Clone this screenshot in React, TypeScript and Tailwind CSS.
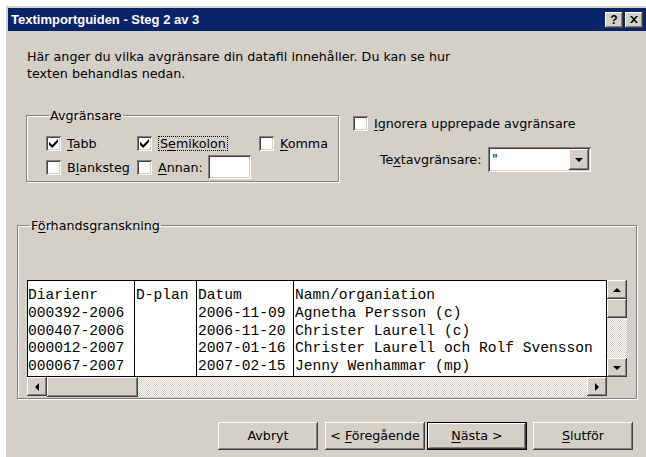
import React from "react";

// classic 3D edges
const raised =
  "shadow-[inset_-1px_-1px_#404040,inset_1px_1px_#ffffff,inset_-2px_-2px_#808080,inset_2px_2px_#d4d0c8]";
const sunken =
  "shadow-[inset_1px_1px_#808080,inset_-1px_-1px_#ffffff,inset_2px_2px_#404040,inset_-2px_-2px_#d4d0c8]";
const track =
  "bg-[image:repeating-conic-gradient(#d4d0c8_0_25%,#ffffff_0_50%)] bg-size-[2px_2px]";

type Dir = "up" | "down" | "left" | "right";

function Arrow({ dir }: { dir: Dir }) {
  const vertical = dir === "up" || dir === "down";
  const pts = {
    up: "0,4 4,0 8,4",
    down: "0,0 8,0 4,4",
    left: "4,0 4,8 0,4",
    right: "0,0 4,4 0,8",
  }[dir];
  return (
    <svg
      width={vertical ? 8 : 4}
      height={vertical ? 4 : 8}
      viewBox={vertical ? "0 0 8 4" : "0 0 4 8"}
    >
      <polygon points={pts} fill="#000" />
    </svg>
  );
}

function ScrollButton({ dir }: { dir: Dir }) {
  return (
    <div
      className={`flex h-[19px] w-[20px] shrink-0 items-center justify-center bg-[#d4d0c8] ${raised}`}
    >
      <Arrow dir={dir} />
    </div>
  );
}

function Check({ checked }: { checked?: boolean }) {
  return (
    <span
      className={`flex h-[15px] w-[15px] shrink-0 items-center justify-center bg-white ${sunken}`}
    >
      {checked && (
        <svg width="9" height="9" viewBox="0 0 7 7">
          <path d="M0 2.2 L2.5 4.6 L7 0 L7 2.4 L2.5 7 L0 4.6 Z" fill="#000" />
        </svg>
      )}
    </span>
  );
}

function U({ children }: { children: React.ReactNode }) {
  return <span className="underline underline-offset-[2px]">{children}</span>;
}

function Option({
  checked,
  focused,
  children,
}: {
  checked?: boolean;
  focused?: boolean;
  children: React.ReactNode;
}) {
  return (
    <label className="flex items-center gap-[6px] whitespace-nowrap">
      <Check checked={checked} />
      <span
        className={
          focused
            ? "border border-dotted border-black px-[1px] leading-[13px]"
            : "leading-[15px]"
        }
      >
        {children}
      </span>
    </label>
  );
}

function TitleButton({ children }: { children: React.ReactNode }) {
  return (
    <div
      className={`flex h-[16px] w-[18px] items-center justify-center bg-[#d4d0c8] font-['Liberation_Sans',Arial,sans-serif] text-[12px] font-bold leading-none text-black ${raised}`}
    >
      {children}
    </div>
  );
}

function PushButton({
  children,
  isDefault,
}: {
  children: React.ReactNode;
  isDefault?: boolean;
}) {
  const face = (
    <div
      className={`flex h-full w-full items-center justify-center bg-[#d4d0c8] ${raised}`}
    >
      <span className="whitespace-pre">{children}</span>
    </div>
  );
  if (isDefault) {
    return <div className="h-[28px] w-[100px] border border-black">{face}</div>;
  }
  return <div className="h-[28px] w-[100px]">{face}</div>;
}

const rows = [
  ["Diarienr", "D-plan", "Datum", "Namn/organiation"],
  ["000392-2006", "", "2006-11-09", "Agnetha Persson (c)"],
  ["000407-2006", "", "2006-11-20", "Christer Laurell (c)"],
  ["000012-2007", "", "2007-01-16", "Christer Laurell och Rolf Svensson"],
  ["000067-2007", "", "2007-02-15", "Jenny Wenhammar (mp)"],
];

const columns = [
  "w-[107px] shrink-0 border-r border-black",
  "w-[62px] shrink-0 border-r border-black pl-[1px]",
  "w-[97px] shrink-0 border-r border-black pl-[1px]",
  "flex-1 pl-[1px]",
];

function Preview() {
  return (
    <div className="flex w-[600px] flex-col">
      <div className="flex h-[97px]">
        <div className="flex w-[580px] overflow-hidden border border-black bg-white font-['Liberation_Mono','Courier_New',monospace] text-[14.6px] leading-[17.8px]">
          {columns.map((cls, ci) => (
            <div key={ci} className={`${cls} pt-[6px] whitespace-pre`}>
              {rows.map((r, ri) => (
                <div key={ri}>{r[ci] || " "}</div>
              ))}
            </div>
          ))}
        </div>
        <div className="flex w-[20px] flex-col">
          <ScrollButton dir="up" />
          <div className={`h-[19px] bg-[#d4d0c8] ${raised}`} />
          <div className={`flex-1 ${track}`} />
          <ScrollButton dir="down" />
        </div>
      </div>
      <div className="flex h-[20px] w-[580px]">
        <ScrollButton dir="left" />
        <div className={`h-[20px] w-[91px] bg-[#d4d0c8] ${raised}`} />
        <div className={`flex-1 ${track}`} />
        <ScrollButton dir="right" />
      </div>
    </div>
  );
}

export default function App() {
  return (
    <div className="h-[457px] w-[646px] overflow-hidden bg-white pl-[5px] pt-[5px] font-['DejaVu_Sans',Tahoma,sans-serif] text-[12.7px] text-black">
      <div className="h-[470px] w-[645px] bg-[#d4d0c8] p-[3px] shadow-[inset_1px_1px_#ffffff]">
        {/* title bar */}
        <div className="flex h-[23px] items-center justify-between bg-[#0a246a] pl-[3px] pr-[4px]">
          <span className="font-['Liberation_Sans',Arial,sans-serif] text-[13px] font-bold text-white">
            Textimportguiden - Steg 2 av 3
          </span>
          <div className="flex gap-[2px]">
            <TitleButton>?</TitleButton>
            <TitleButton>
              <svg width="8" height="7" viewBox="0 0 8 7">
                <path d="M0 0 L2 0 L4 2.3 L6 0 L8 0 L5 3.5 L8 7 L6 7 L4 4.7 L2 7 L0 7 L3 3.5 Z" fill="#000" />
              </svg>
            </TitleButton>
          </div>
        </div>

        <p className="ml-[19px] mt-[17px] leading-[17px]">
          Här anger du vilka avgränsare din datafil innehåller. Du kan se hur
          <br />
          texten behandlas nedan.
        </p>

        <div className="mt-[26px] flex">
          {/* delimiter group */}
          <fieldset className="ml-[18px] h-[74px] w-[313px] border border-[#808080] pl-[19px] pt-[8px] shadow-[1px_1px_#ffffff,inset_1px_1px_#ffffff]">
            <legend className="ml-[3px] px-[1px] leading-[15px]">Avgränsare</legend>
            <div className="grid grid-cols-[91px_122px_auto]">
              <div className="flex h-[24px] items-center">
                <Option checked>
                  <U>T</U>abb
                </Option>
              </div>
              <div className="flex h-[24px] items-center">
                <Option checked focused>
                  S<U>e</U>mikolon
                </Option>
              </div>
              <div className="flex h-[24px] items-center">
                <Option>
                  <U>K</U>omma
                </Option>
              </div>
              <div className="flex h-[24px] items-center">
                <Option>
                  B<U>l</U>anksteg
                </Option>
              </div>
              <div className="col-span-2 flex h-[24px] items-center gap-[5px]">
                <Option>
                  <U>A</U>nnan:
                </Option>
                <div className={`h-[24px] w-[43px] bg-white ${sunken}`} />
              </div>
            </div>
          </fieldset>

          {/* other options */}
          <div className="ml-[14px] flex flex-col pt-[8px]">
            <Option>
              <U>I</U>gnorera upprepade avgränsare
            </Option>
            <div className="ml-[27px] mt-[16px] flex items-center">
              <span className="w-[108px]">
                Te<U>x</U>tavgränsare:
              </span>
              <div className={`flex h-[25px] w-[103px] items-center bg-white p-[2px] ${sunken}`}>
                <span className="flex-1 pl-[2px] leading-none">"</span>
                <div className={`flex h-[21px] w-[20px] items-center justify-center bg-[#d4d0c8] ${raised}`}>
                  <Arrow dir="down" />
                </div>
              </div>
            </div>
          </div>
        </div>

        {/* preview group */}
        <fieldset className="ml-[9px] mt-[36px] h-[181px] w-[620px] border border-[#808080] pl-[9px] pt-[47px] shadow-[1px_1px_#ffffff,inset_1px_1px_#ffffff]">
          <legend className="ml-[3px] px-[1px] leading-[15px]">
            F<U>ö</U>rhandsgranskning
          </legend>
          <Preview />
        </fieldset>

        {/* wizard buttons */}
        <div className="mt-[23px] flex justify-end pr-[14px]">
          <PushButton>Avbryt</PushButton>
          <div className="ml-[7px]">
            <PushButton>
              {"< "}
              <U>F</U>öregående
            </PushButton>
          </div>
          <div className="ml-[2px]">
            <PushButton isDefault>
              <U>N</U>ästa &gt;
            </PushButton>
          </div>
          <div className="ml-[6px]">
            <PushButton>
              <U>S</U>lutför
            </PushButton>
          </div>
        </div>
      </div>
    </div>
  );
}
